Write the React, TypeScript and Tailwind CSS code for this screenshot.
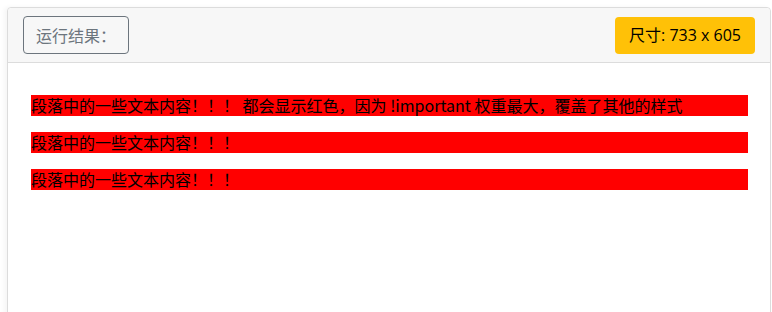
import React from "react";

const lines = [
  "段落中的一些文本内容！！！ 都会显示红色，因为 !important 权重最大，覆盖了其他的样式",
  "段落中的一些文本内容！！！",
  "段落中的一些文本内容！！！",
];

const App: React.FC = () => {
  return (
    <div
      className="w-[772px] h-[312px] bg-white pl-[7px] pt-[7px] overflow-hidden"
      style={{ fontFamily: '"Noto Sans CJK SC", "Liberation Sans", sans-serif' }}
    >
      {/* Card */}
      <div className="w-[764px] h-[320px] bg-white border border-[#dcdcdc] rounded-[4px] shadow-[-3px_0_4px_rgba(0,0,0,0.04)]">
        {/* Header */}
        <div className="flex items-center justify-between h-[55px] px-[15px] bg-[#f7f7f7] border-b border-[#dcdcdc] rounded-t-[4px]">
          <div className="h-[38px] px-3 flex items-center border border-[#6c757d] rounded-[4px] text-[#6c757d] text-base leading-none">
            运行结果：
          </div>
          <div className="h-[37px] px-[14px] flex items-center bg-[#ffc107] rounded-[4px] text-black text-base leading-none font-['Open_Sans','Noto_Sans_CJK_SC',sans-serif]">
            尺寸: 733 x 605
          </div>
        </div>

        {/* Body */}
        <div className="pl-[23px] pr-[22px] pt-[32px]">
          {lines.map((text, i) => (
            <p
              key={i}
              className="bg-[#ff0000] text-black text-base leading-[21px] h-[21px] mb-4 whitespace-nowrap"
            >
              {text}
            </p>
          ))}
        </div>
      </div>
    </div>
  );
};

export default App;
